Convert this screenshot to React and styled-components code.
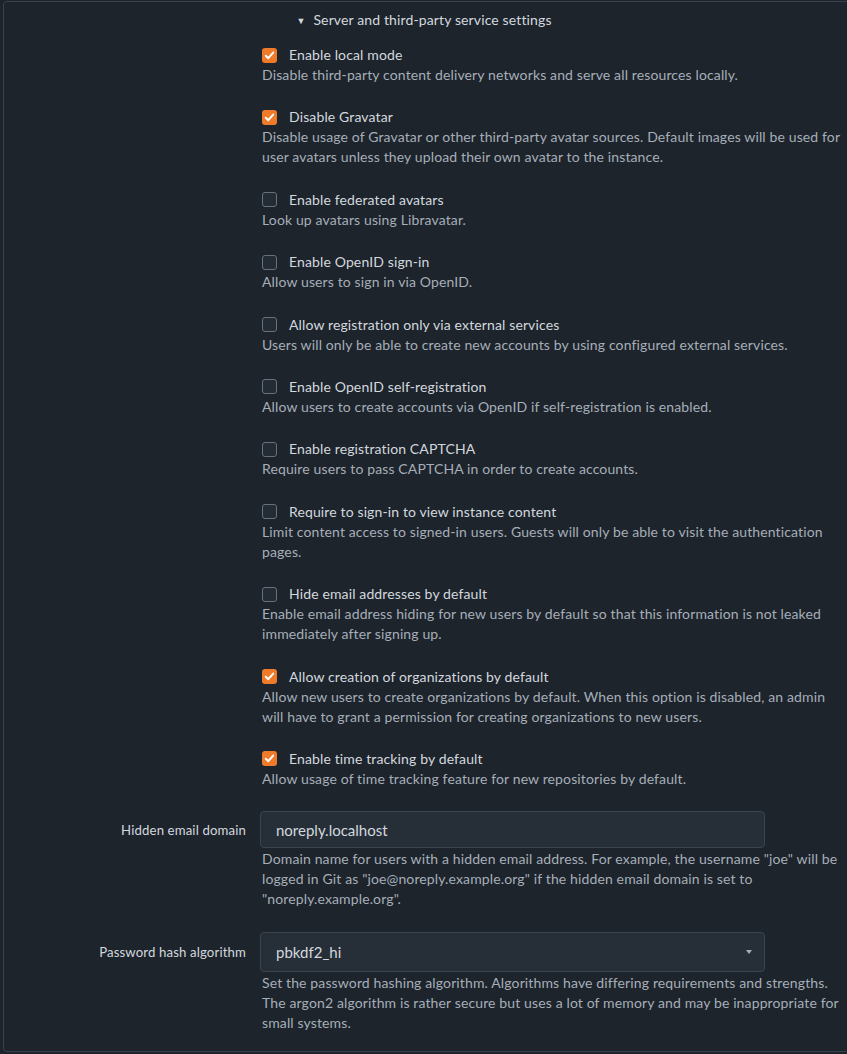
import React from "react";
import styled, { createGlobalStyle } from "styled-components";

const GlobalStyle = createGlobalStyle`
  html, body {
    margin: 0;
    background: #1d242c;
    overflow: hidden;
  }
  body {
    font-family: Lato, "Noto Sans", sans-serif;
    font-size: 14px;
    letter-spacing: 0.13px;
    color: #d3d8de;
  }
`;

const Panel = styled.section`
  margin: 1px 0 0 3px;
  width: 870px;
  box-sizing: border-box;
  border: 1px solid #38414c;
  border-radius: 4px;
  background: #1d242c;
  padding: 8px 0 18px;
`;

const Summary = styled.div`
  text-align: center;
  line-height: 20px;
  padding-right: 28px;
  color: #d3d8de;
  margin-bottom: 14px;
`;

const Caret = styled.span`
  display: inline-block;
  font-size: 9px;
  margin-right: 8px;
  vertical-align: 1px;
`;

const Fields = styled.div`
  display: flex;
  flex-direction: column;
  gap: 22.4px;
`;

const Field = styled.div`
  display: grid;
  grid-template-columns: 242px 587px;
  column-gap: 14px;
`;

const FieldLabel = styled.label`
  grid-column: 1;
  height: ${(p) => p.$h}px;
  display: flex;
  align-items: center;
  justify-content: flex-end;
  font-size: 13.2px;
  color: #d3d8de;
`;

const Body = styled.div`
  grid-column: 2;
  padding-left: ${(p) => (p.$inset ? 2 : 0)}px;
`;

const CheckRow = styled.label`
  display: flex;
  align-items: center;
  gap: 12px;
  line-height: 20px;
  color: #d3d8de;
`;

const Box = styled.span`
  width: 15px;
  height: 15px;
  box-sizing: border-box;
  border-radius: 3px;
  flex: none;
  display: flex;
  align-items: center;
  justify-content: center;
  background: ${(p) => (p.$on ? "#ef7b2a" : "#232b34")};
  border: ${(p) => (p.$on ? "none" : "1.5px solid #68717c")};
`;

const Help = styled.p`
  margin: 0;
  line-height: 20px;
  color: #a6aeb8;
  padding-left: ${(p) => (p.$inset ? 2 : 0)}px;
`;

const Control = styled.div`
  position: relative;
  width: 505px;
  height: ${(p) => p.$h}px;
  box-sizing: border-box;
  border: 1px solid #3a444f;
  border-radius: 4px;
  background: #262e38;
  display: flex;
  align-items: center;
  padding: 0 15px;
  font-size: 15px;
  letter-spacing: 0;
  color: #d3d8de;
  margin-bottom: 1px;
`;

const Arrow = styled.span`
  position: absolute;
  right: 12px;
  top: 50%;
  margin-top: -2px;
  width: 0;
  height: 0;
  border-left: 3.5px solid transparent;
  border-right: 3.5px solid transparent;
  border-top: 4px solid #a6aeb8;
`;

const Check = () => (
  <svg width="11" height="11" viewBox="0 0 11 11">
    <polyline
      points="1.8,5.8 4.3,8.2 9.2,2.6"
      fill="none"
      stroke="#fff"
      strokeWidth="2"
      strokeLinecap="round"
      strokeLinejoin="round"
    />
  </svg>
);

const options = [
  ["Enable local mode", true, "Disable third-party content delivery networks and serve all resources locally."],
  ["Disable Gravatar", true, "Disable usage of Gravatar or other third-party avatar sources. Default images will be used for user avatars unless they upload their own avatar to the instance."],
  ["Enable federated avatars", false, "Look up avatars using Libravatar."],
  ["Enable OpenID sign-in", false, "Allow users to sign in via OpenID."],
  ["Allow registration only via external services", false, "Users will only be able to create new accounts by using configured external services."],
  ["Enable OpenID self-registration", false, "Allow users to create accounts via OpenID if self-registration is enabled."],
  ["Enable registration CAPTCHA", false, "Require users to pass CAPTCHA in order to create accounts."],
  ["Require to sign-in to view instance content", false, "Limit content access to signed-in users. Guests will only be able to visit the authentication pages."],
  ["Hide email addresses by default", false, "Enable email address hiding for new users by default so that this information is not leaked immediately after signing up."],
  ["Allow creation of organizations by default", true, "Allow new users to create organizations by default. When this option is disabled, an admin will have to grant a permission for creating organizations to new users."],
  ["Enable time tracking by default", true, "Allow usage of time tracking feature for new repositories by default."],
];

const App = () => (
  <>
    <GlobalStyle />
    <Panel>
      <Summary>
        <Caret>▼</Caret>Server and third-party service settings
      </Summary>
      <Fields>
        {options.map(([title, on, help]) => (
          <Field key={title}>
            <Body $inset>
              <CheckRow>
                <Box $on={on}>{on && <Check />}</Box>
                {title}
              </CheckRow>
              <Help>{help}</Help>
            </Body>
          </Field>
        ))}
        <Field>
          <FieldLabel $h={37}>Hidden email domain</FieldLabel>
          <Body>
            <Control $h={37}>noreply.localhost</Control>
            <Help $inset>
              Domain name for users with a hidden email address. For example, the username "joe" will be logged in Git as "joe@noreply.example.org" if the hidden email domain is set to "noreply.example.org".
            </Help>
          </Body>
        </Field>
        <Field>
          <FieldLabel $h={40}>Password hash algorithm</FieldLabel>
          <Body>
            <Control $h={40}>
              pbkdf2_hi
              <Arrow />
            </Control>
            <Help $inset>
              Set the password hashing algorithm. Algorithms have differing requirements and strengths. The argon2 algorithm is rather secure but uses a lot of memory and may be inappropriate for small systems.
            </Help>
          </Body>
        </Field>
      </Fields>
    </Panel>
  </>
);

export default App;
